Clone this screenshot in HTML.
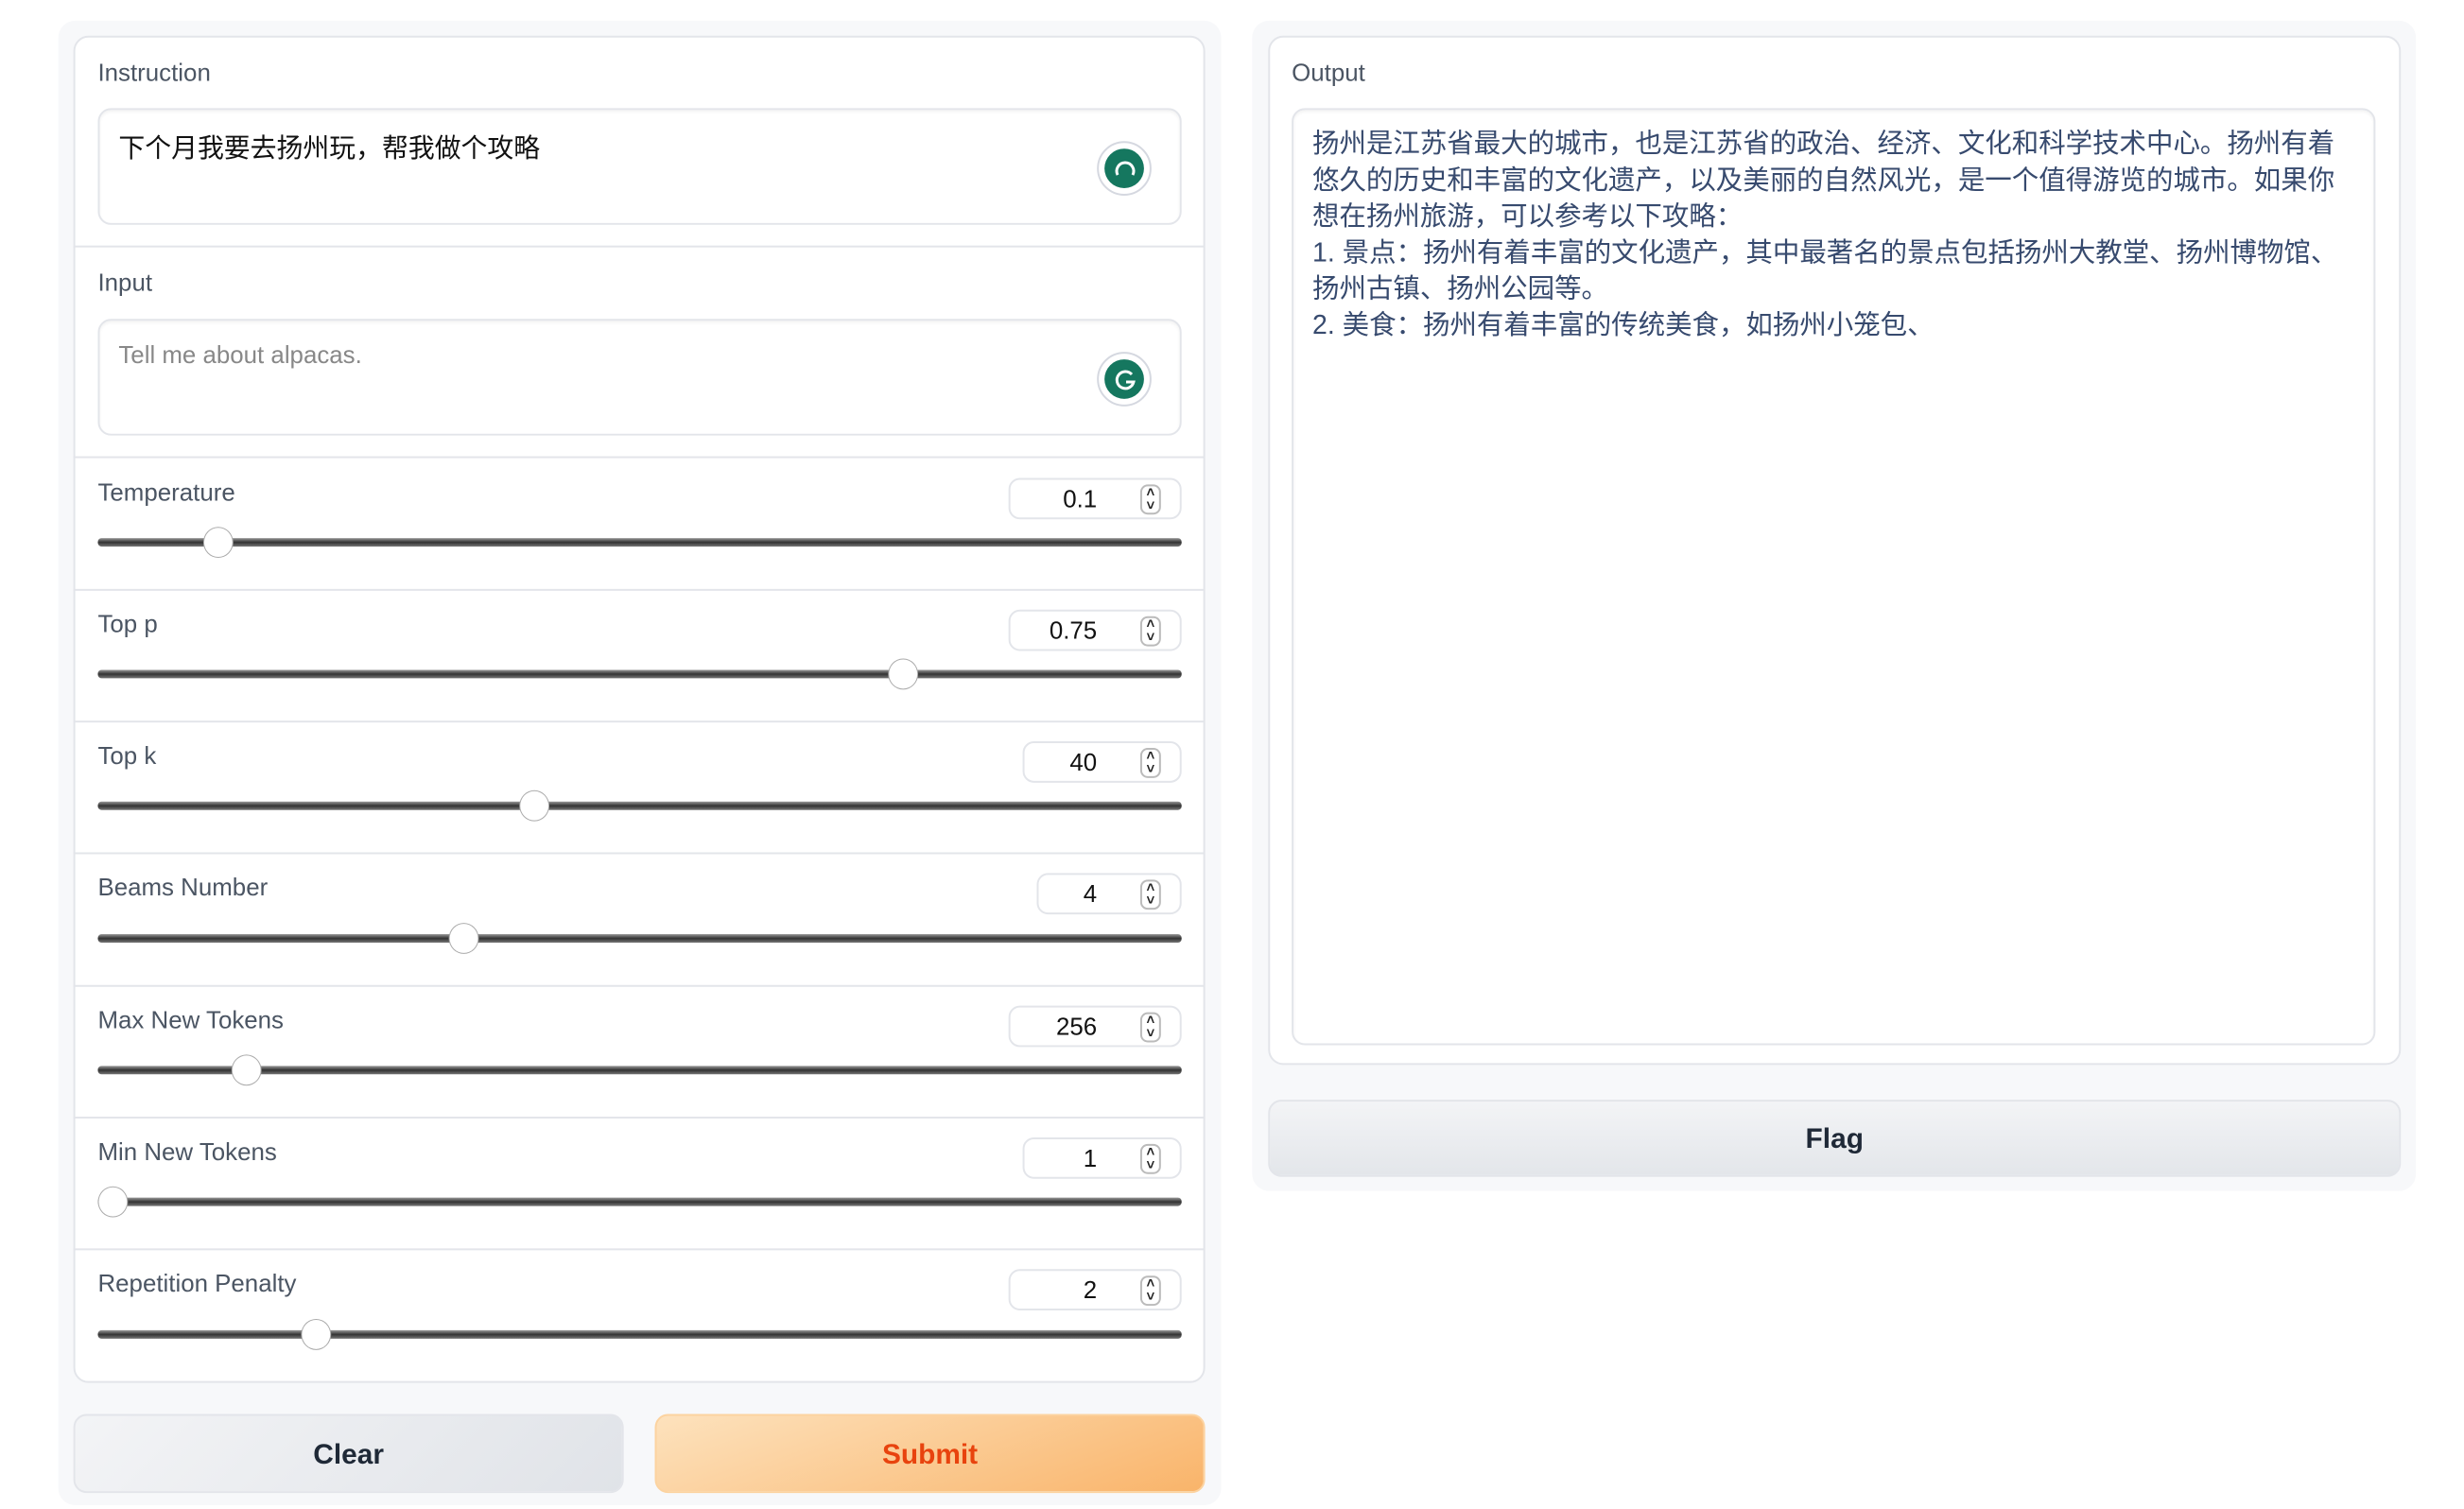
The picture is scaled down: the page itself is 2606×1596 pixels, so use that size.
<!DOCTYPE html>
<html><head><meta charset="utf-8"><style>
*{box-sizing:border-box;margin:0;padding:0}
body{width:2606px;height:1596px;background:#fff;font-family:"Liberation Sans","Noto Sans CJK SC",sans-serif;position:relative;overflow:hidden;color:#374151}
#w{position:absolute;left:0;top:0;width:2606px;height:1596px;transform:scale(0.995);transform-origin:0 0}
.abs{position:absolute}
.outer{background:#f7f8fa;border-radius:18px}
.card{background:#fff;border:2px solid #e3e5ea;border-radius:16px}
.lbl{font-size:26px;color:#4b5563}
.ta{border:2px solid #e3e5ea;border-radius:14px;background:#fff;box-shadow:inset 0 2px 3px rgba(0,0,0,.05)}
.div{height:2px;background:#e3e5ea;left:78px;width:1203px}
.num{border:2px solid #e3e5ea;border-radius:12px;background:#fff;height:44px;font-size:26px;color:#111;text-align:right;padding-right:88px;line-height:40px}
.spin{position:absolute;right:20px;top:5px;width:22px;height:32px;border:2px solid #bbb;border-radius:8px;font-size:15px;line-height:14px;text-align:center;color:#222;font-weight:bold}
.track{left:104px;width:1152px;height:9px;border-radius:4px;background:linear-gradient(#999,#333 50%,#777)}
.thumb{width:32px;height:33px;border-radius:50%;background:#fff;border:1.5px solid #aaa}
.gic{width:58px;height:58px;border-radius:50%;border:2px solid #d5d8e0;background:#fff}
.gic div{position:absolute;left:6px;top:6px;width:42px;height:42px;border-radius:50%;background:#15775f}
.btn{border-radius:14px;font-weight:bold;font-size:30px;text-align:center;line-height:84px;border:2px solid #e3e5ea}
</style></head><body><div id="w">
<div class="abs outer" style="left:62px;top:22px;width:1236px;height:1578px"></div>
<div class="abs card" style="left:78px;top:38px;width:1203px;height:1432px"></div>
<div class="abs lbl" style="left:104px;top:62px">Instruction</div>
<div class="abs ta" style="left:104px;top:115px;width:1152px;height:124px"></div>
<div class="abs" style="left:126px;top:136px;font-size:28px;color:#111">下个月我要去扬州玩，帮我做个攻略</div>
<div class="abs gic" style="left:1166px;top:150px"><div></div></div>
<svg class="abs" style="left:1184px;top:168px" width="24" height="24"><path d="M4 18 A9 9 0 1 1 20 18" stroke="#fff" stroke-width="3" fill="none"/></svg>
<div class="abs div" style="top:261px"></div>
<div class="abs lbl" style="left:104px;top:285px">Input</div>
<div class="abs ta" style="left:104px;top:339px;width:1152px;height:124px"></div>
<div class="abs" style="left:126px;top:362px;font-size:26px;color:#888">Tell me about alpacas.</div>
<div class="abs gic" style="left:1166px;top:374px"><div></div></div>
<svg class="abs" style="left:1182px;top:390px" width="28" height="28"><path d="M21 8 A9 9 0 1 0 23 16 L15 16" stroke="#fff" stroke-width="3" fill="none"/></svg>
<div class="abs div" style="top:485px"></div>

<div class="abs lbl" style="left:104px;top:508px">Temperature</div>
<div class="abs num" style="left:1072px;top:508px;width:184px">0.1<div class="spin">˄<br>˅</div></div>
<div class="abs track" style="top:572px"></div><div class="abs thumb" style="left:216px;top:560px"></div>
<div class="abs div" style="top:626px"></div>

<div class="abs lbl" style="left:104px;top:648px">Top p</div>
<div class="abs num" style="left:1072px;top:648px;width:184px">0.75<div class="spin">˄<br>˅</div></div>
<div class="abs track" style="top:712px"></div><div class="abs thumb" style="left:944px;top:700px"></div>
<div class="abs div" style="top:766px"></div>

<div class="abs lbl" style="left:104px;top:788px">Top k</div>
<div class="abs num" style="left:1087px;top:788px;width:169px">40<div class="spin">˄<br>˅</div></div>
<div class="abs track" style="top:852px"></div><div class="abs thumb" style="left:552px;top:840px"></div>
<div class="abs div" style="top:906px"></div>

<div class="abs lbl" style="left:104px;top:928px">Beams Number</div>
<div class="abs num" style="left:1102px;top:928px;width:154px">4<div class="spin">˄<br>˅</div></div>
<div class="abs track" style="top:993px"></div><div class="abs thumb" style="left:477px;top:981px"></div>
<div class="abs div" style="top:1047px"></div>

<div class="abs lbl" style="left:104px;top:1069px">Max New Tokens</div>
<div class="abs num" style="left:1072px;top:1069px;width:184px">256<div class="spin">˄<br>˅</div></div>
<div class="abs track" style="top:1133px"></div><div class="abs thumb" style="left:246px;top:1121px"></div>
<div class="abs div" style="top:1187px"></div>

<div class="abs lbl" style="left:104px;top:1209px">Min New Tokens</div>
<div class="abs num" style="left:1087px;top:1209px;width:169px">1<div class="spin">˄<br>˅</div></div>
<div class="abs track" style="top:1273px"></div><div class="abs thumb" style="left:104px;top:1261px"></div>
<div class="abs div" style="top:1327px"></div>

<div class="abs lbl" style="left:104px;top:1349px">Repetition Penalty</div>
<div class="abs num" style="left:1072px;top:1349px;width:184px">2<div class="spin">˄<br>˅</div></div>
<div class="abs track" style="top:1414px"></div><div class="abs thumb" style="left:320px;top:1402px"></div>

<div class="abs btn" style="left:78px;top:1503px;width:585px;height:84px;background:linear-gradient(135deg,#f3f4f6,#e0e3e8);color:#1f2937">Clear</div>
<div class="abs btn" style="left:696px;top:1503px;width:585px;height:84px;background:linear-gradient(160deg,#fde2bd,#f9b46a);border-color:#fcd3a0;color:#e8430e">Submit</div>

<div class="abs outer" style="left:1331px;top:22px;width:1237px;height:1244px"></div>
<div class="abs card" style="left:1348px;top:38px;width:1204px;height:1094px"></div>
<div class="abs lbl" style="left:1373px;top:62px">Output</div>
<div class="abs ta" style="left:1373px;top:115px;width:1152px;height:996px"></div>
<div class="abs" style="left:1395px;top:134px;width:1110px;font-size:28.6px;line-height:38.5px;color:#374a6e">扬州是江苏省最大的城市，也是江苏省的政治、经济、文化和科学技术中心。扬州有着<br>悠久的历史和丰富的文化遗产，以及美丽的自然风光，是一个值得游览的城市。如果你<br>想在扬州旅游，可以参考以下攻略：<br>1. 景点：扬州有着丰富的文化遗产，其中最著名的景点包括扬州大教堂、扬州博物馆、<br>扬州古镇、扬州公园等。<br>2. 美食：扬州有着丰富的传统美食，如扬州小笼包、</div>
<div class="abs btn" style="left:1348px;top:1169px;width:1204px;height:82px;line-height:80px;background:linear-gradient(#f3f4f6,#e3e6ea);color:#1f2937">Flag</div>
</div></body></html>
